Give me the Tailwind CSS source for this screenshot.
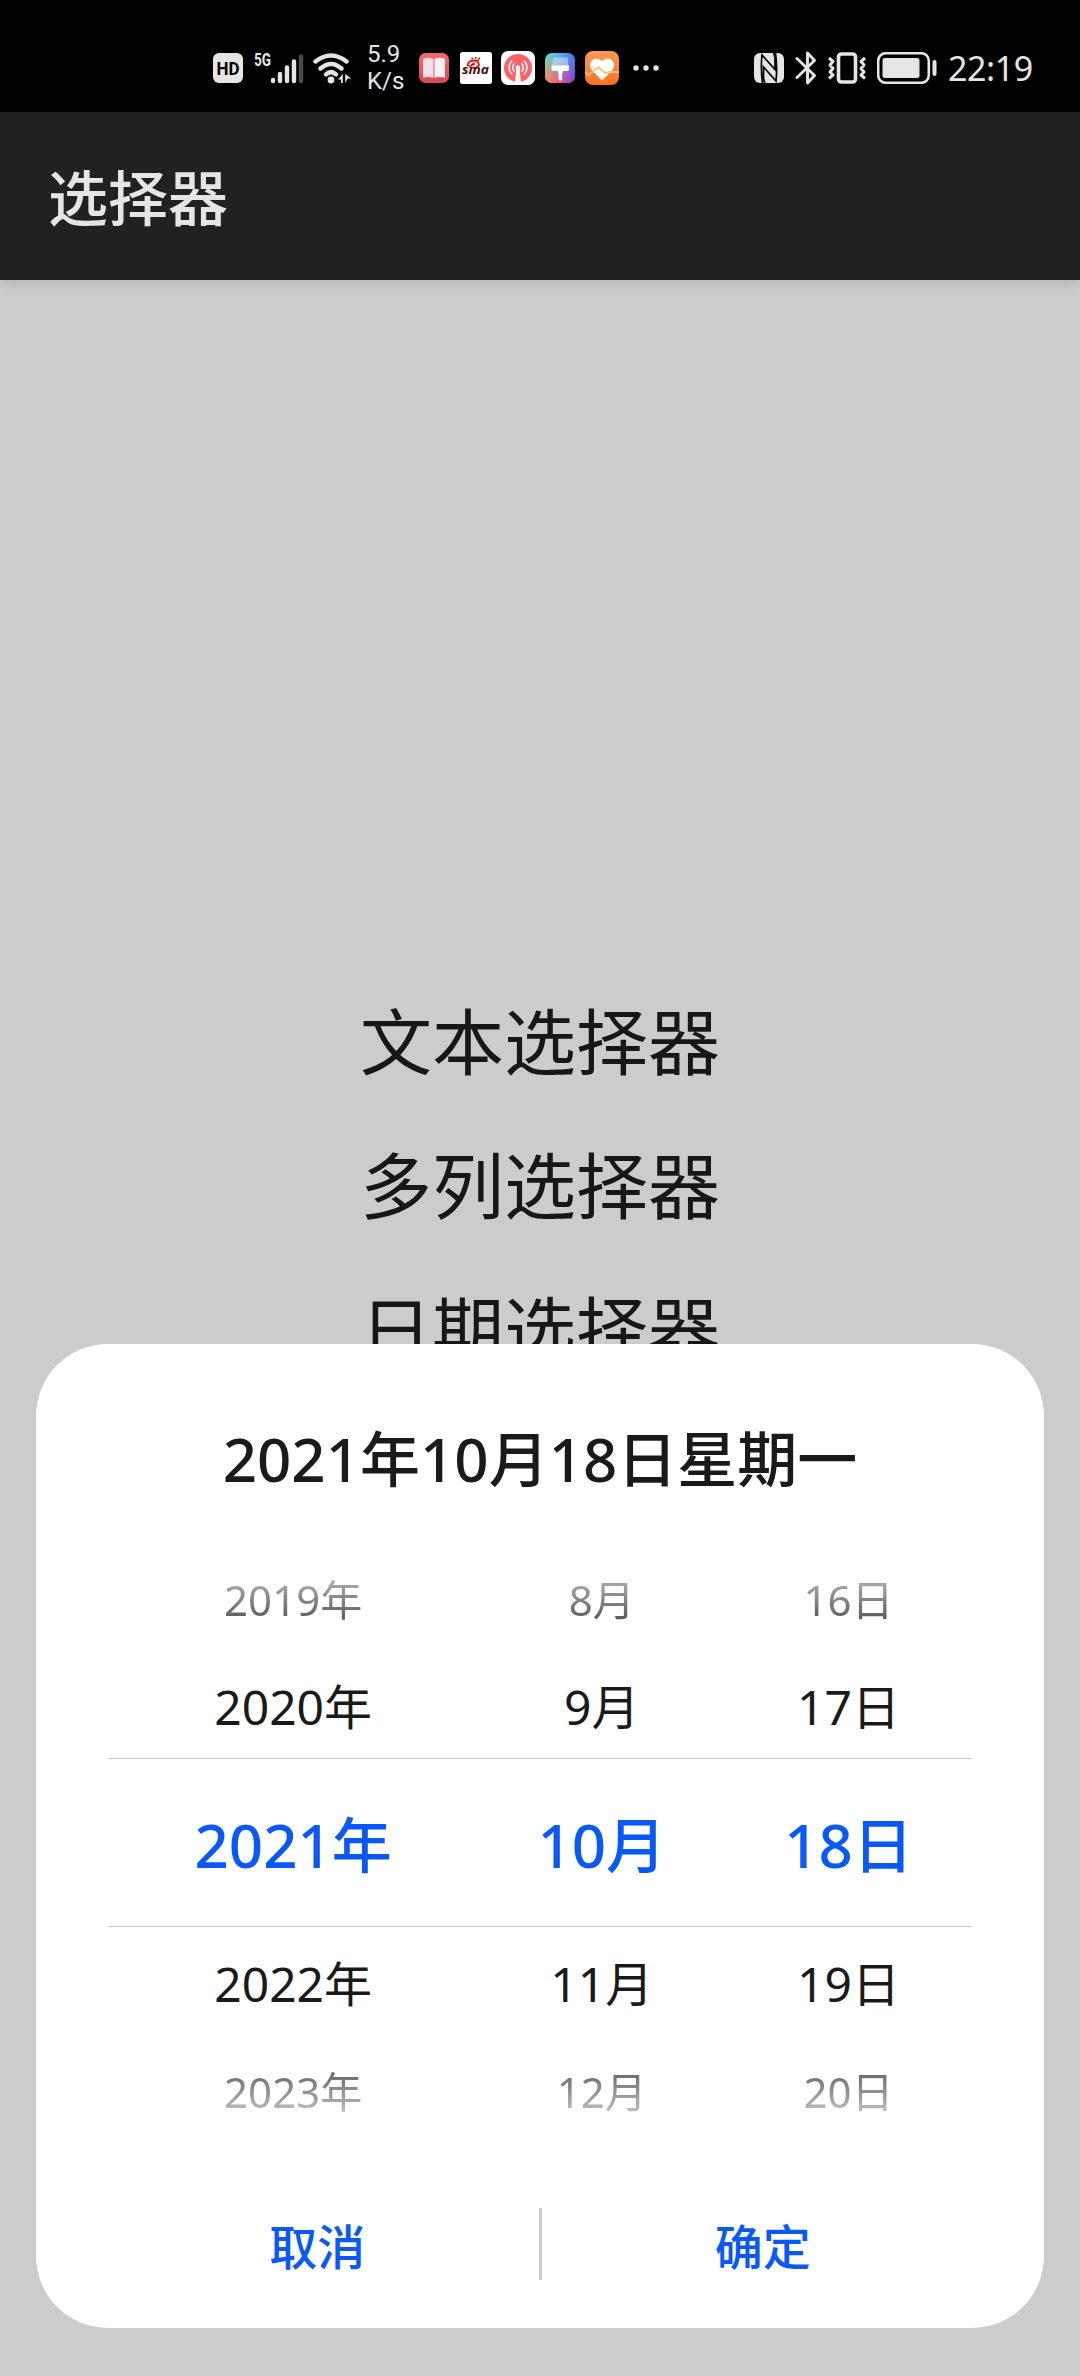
<!DOCTYPE html>
<html lang="zh-CN">
<head>
  <meta charset="UTF-8" />
  <meta name="viewport" content="width=device-width, initial-scale=1.0" />
  <title>选择器</title>
  <script src="https://cdn.jsdelivr.net/npm/@tailwindcss/browser@4"></script>
</head>
<body class="relative flex h-[2376px] w-[1080px] flex-col overflow-hidden bg-[#cccccc] font-['Noto_Sans','Noto_Sans_CJK_SC',sans-serif] text-[#171717]">

  <!-- status bar -->
  <div class="flex h-28 shrink-0 items-center bg-black pt-6 pr-[47px] pl-[213px] text-[#e5e5e5]">
    <svg class="h-[30px] w-[30px]" viewBox="0 0 30 30">
      <rect width="30" height="30" rx="6" fill="#e5e5e5" />
      <text x="15" y="21.500" text-anchor="middle" font-family="Roboto" font-weight="700" font-size="18" textLength="23" lengthAdjust="spacingAndGlyphs" fill="#000">HD</text>
    </svg>
    <svg class="ml-[10px] h-[32px] w-[51px] overflow-visible" viewBox="0 0 51 32">
      <text x="1" y="14" font-family="Roboto" font-weight="700" font-size="19" textLength="17" lengthAdjust="spacingAndGlyphs" fill="#e5e5e5">5G</text>
      <g stroke="#e5e5e5" stroke-width="4.400" stroke-linecap="round">
        <path d="M20 28v1M27 22v7M34 15.500v13.500M41 9.500v19.500" />
        <path d="M48 4.500v24.500" stroke="#4a4a4a" />
      </g>
    </svg>
    <svg class="ml-[9px] h-[32px] w-[39px]" viewBox="0 0 39 32">
      <g fill="none" stroke="#e5e5e5" stroke-width="4.400" stroke-linecap="round">
        <path d="M2.500 9.500Q18 -2.500 33.500 9.500" />
        <path d="M7.500 16.500Q18 7.500 28.500 16.500" />
        <path d="M13 22.300Q18 18 23 22.300" />
      </g>
      <circle cx="18" cy="28" r="3.400" fill="#e5e5e5" />
      <path d="M29.800 22v9h-1.800v-3.500L25 27.500z M32.200 31v-9l6 4.500h-3.500z" fill="#e5e5e5" />
    </svg>
    <div class="ml-[15px] w-[36px] font-[Roboto] text-[24px] leading-[27px]">5.9<br />K/s</div>

    <!-- notification icons -->
    <svg class="ml-[16px] h-[30px] w-[30px]" viewBox="0 0 30 30">
      <defs>
        <linearGradient id="book" x1="0" y1="0" x2="0" y2="1"><stop stop-color="#f4686c" /><stop offset="1" stop-color="#d9484f" /></linearGradient>
      </defs>
      <rect width="30" height="30" rx="6.500" fill="url(#book)" />
      <path d="M4 6Q9 3.500 14.500 6V24.500Q9 23.500 4 24.500z" fill="#fbdfe8" />
      <path d="M15.500 6Q20 3.500 26 6V24.500Q20 23.500 15.500 24.500z" fill="#fdf0f5" />
      <path d="M15 5.500V25" stroke="#f0a0b0" />
    </svg>
    <svg class="ml-[11px] h-[32px] w-[32px]" viewBox="0 0 32 32">
      <rect width="32" height="32" rx="2.500" fill="#fff" />
      <path d="M7.500 14Q8 9 13 8.500Q18.500 8.500 19 13Q17 16.500 12.500 15.800Q9 15.300 9.500 13" fill="none" stroke="#d9261c" stroke-width="2" />
      <path d="M12.500 7.500l-.5-2M15.500 7.500l.5-2.500M18 9l1.500-3.500" stroke="#d9261c" stroke-width="1.600" />
      <circle cx="13.500" cy="12" r="1.600" fill="#d9261c" />
      <text x="2" y="21.500" font-family="Open Sans" font-style="italic" font-weight="700" font-size="13" textLength="27" lengthAdjust="spacingAndGlyphs" fill="#4a0f12">sina</text>
    </svg>
    <svg class="ml-[9px] h-[34px] w-[34px]" viewBox="0 0 34 34">
      <rect width="34" height="34" rx="7" fill="#fff" />
      <circle cx="17" cy="17" r="14" fill="#fa6468" />
      <path d="M15.500 17h3L20 31.500h-6z" fill="#fff" />
      <circle cx="17" cy="16.500" r="2.300" fill="#fff" />
      <g fill="none" stroke="#fff" stroke-width="1.500" stroke-linecap="round">
        <path d="M13.300 20.300a5.200 5.200 0 0 1 0 -7.600M20.700 20.300a5.200 5.200 0 0 0 0 -7.600" />
        <path d="M10.800 23a9 9 0 0 1 0 -13M23.200 23a9 9 0 0 0 0 -13" />
      </g>
    </svg>
    <svg class="ml-[10px] h-[30px] w-[30px]" viewBox="0 0 30 30">
      <defs>
        <linearGradient id="b1" x1="0" y1="0" x2="1" y2="0"><stop stop-color="#6fd5b5" /><stop offset=".5" stop-color="#4fb0f0" /><stop offset="1" stop-color="#4d73f0" /></linearGradient>
        <linearGradient id="b2" x1="0" y1="0" x2="1" y2="0"><stop stop-color="#f79a50" /><stop offset=".5" stop-color="#ee5590" /><stop offset="1" stop-color="#7a45e8" /></linearGradient>
        <linearGradient id="fade" x1="0" y1="0" x2="0" y2="1"><stop offset=".15" stop-color="#000" /><stop offset=".9" stop-color="#fff" /></linearGradient>
        <mask id="m"><rect width="30" height="30" fill="url(#fade)" /></mask>
      </defs>
      <rect width="30" height="30" rx="7" fill="url(#b1)" />
      <rect width="30" height="30" rx="7" fill="url(#b2)" mask="url(#m)" />
      <path d="M8 4.500h15v9H7z" fill="#fff" opacity=".4" />
      <path d="M6.500 12.500h17.500v3.500q0 2-2 2h-4v2h-5v-2h-4.500q-2 0-2-2z" fill="#fff" />
      <path d="M15.300 18v8" stroke="#fff" stroke-width="3.600" stroke-linecap="round" />
    </svg>
    <svg class="ml-[10px] h-[34px] w-[34px]" viewBox="0 0 34 34">
      <defs>
        <linearGradient id="heart" x1="0" y1="0" x2="0" y2="1"><stop stop-color="#fb9a52" /><stop offset="1" stop-color="#f97423" /></linearGradient>
      </defs>
      <rect width="34" height="34" rx="8" fill="url(#heart)" />
      <path d="M17 29.500L7.500 20Q3 14.500 6.500 9.800Q11.500 5 17 10Q22.500 5 27.500 9.800Q31 14.500 26.500 20z" fill="#fff" />
      <path d="M0 21.500L3.500 24L8 20.500L13.500 16.500L20 22L24.500 21H34" fill="none" stroke="#fbc07c" stroke-width="1.800" />
    </svg>
    <svg class="ml-[14px] h-[6px] w-[26px]" viewBox="0 0 26 6" fill="#e5e5e5">
      <circle cx="3" cy="3" r="2.700" /><circle cx="13" cy="3" r="2.700" /><circle cx="23" cy="3" r="2.700" />
    </svg>

    <!-- system icons -->
    <svg class="ml-auto h-[30px] w-[30px]" viewBox="0 0 30 30">
      <rect width="30" height="30" rx="6" fill="#e5e5e5" />
      <path d="M8.500 30Q6.500 15 8 2L21 16.500V6Q21 2.500 19.500 0M21.500 0Q23.500 15 22 28L9.500 14V23.500Q9.500 27.500 11 30" fill="none" stroke="#000" stroke-width="1.700" />
    </svg>
    <svg class="ml-[11px] h-[34px] w-[22px]" viewBox="0 0 22 34" fill="none" stroke="#e5e5e5" stroke-width="2.900" stroke-linejoin="round" stroke-linecap="round">
      <path d="M2 7.500L19.500 24.500L12.500 32V2L19.500 9.500L2 26.500" />
    </svg>
    <svg class="ml-[10px] h-[32px] w-[40px]" viewBox="0 0 40 32" fill="none" stroke="#e5e5e5">
      <rect x="11.500" y="2" width="17" height="28" rx="3" stroke-width="3.600" />
      <path d="M2 6l4 3.500l-3 3.500l3 3.500l-3 3.500l3 3l-4 3.500M38 6l-4 3.500l3 3.500l-3 3.500l3 3.500l-3 3l4 3.500" stroke-width="3" stroke-linejoin="round" />
    </svg>
    <svg class="ml-[10px] h-[32px] w-[60px]" viewBox="0 0 60 32">
      <rect x="1.200" y="1.200" width="50.600" height="29.600" rx="7.500" fill="none" stroke="#e5e5e5" stroke-width="2.600" />
      <rect x="5.500" y="6" width="37" height="20" rx="2.500" fill="#e5e5e5" />
      <rect x="55.500" y="8" width="4" height="16" rx="2" fill="#e5e5e5" />
    </svg>
    <div class="ml-[11px] w-[85px] text-[34px] leading-[34px] tracking-[-0.4px]">22:19</div>
  </div>

  <!-- title bar -->
  <header class="flex h-[168px] shrink-0 items-center bg-[#212121] pl-12 shadow-[0_2px_12px_rgba(0,0,0,0.15)]">
    <h1 class="pt-1 text-[60px] leading-[72px] font-medium text-[#e5e5e5]">选择器</h1>
  </header>

  <main class="flex flex-col items-center pt-[689px] text-[72px] leading-[144px]">
    <p>文本选择器</p>
    <p>多列选择器</p>
    <p>日期选择器</p>
  </main>

  <!-- date picker dialog -->
  <section class="absolute bottom-12 left-9 flex h-[984px] w-[1008px] flex-col rounded-[72px] bg-white text-[#1a1a1a]">
    <h2 class="flex h-[198px] items-center justify-center pt-[31px] text-[60px] leading-[72px] font-medium">2021年10月18日星期一</h2>

    <div class="mx-[72px] text-center">
      <div class="grid h-[108px] grid-cols-[3fr_2fr_2fr] items-center pt-1.5 text-[42px] [mask-image:linear-gradient(to_bottom,transparent,black)]">
        <span>2019年</span><span>8月</span><span>16日</span>
      </div>
      <div class="grid h-[108px] grid-cols-[3fr_2fr_2fr] items-center pt-1.5 text-[48px]">
        <span>2020年</span><span>9月</span><span>17日</span>
      </div>
      <div class="grid h-[169px] grid-cols-[3fr_2fr_2fr] items-center border-y border-[#cccccc] pt-1 text-[60px] font-medium text-[#0a59f7]">
        <span>2021年</span><span>10月</span><span>18日</span>
      </div>
      <div class="grid h-[108px] grid-cols-[3fr_2fr_2fr] items-center pt-1.5 text-[48px]">
        <span>2022年</span><span>11月</span><span>19日</span>
      </div>
      <div class="grid h-[108px] grid-cols-[3fr_2fr_2fr] items-center pt-1 text-[42px] [mask-image:linear-gradient(to_top,transparent,black)]">
        <span>2023年</span><span>12月</span><span>20日</span>
      </div>
    </div>

    <div class="mx-[60px] mt-[65px] flex h-[72px] items-center text-[48px] leading-[72px] font-medium text-[#0a59f7]">
      <button class="flex-1 pt-1.5">取消</button>
      <div class="h-full w-[3px] bg-[#cccccc]"></div>
      <button class="flex-1 pt-1.5">确定</button>
    </div>
  </section>

</body>
</html>
